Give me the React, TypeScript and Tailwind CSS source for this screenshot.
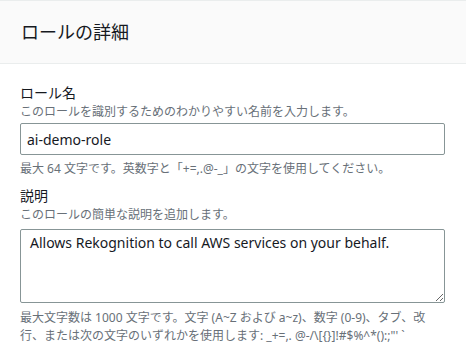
import React from "react";

export default function App() {
  const font = { fontFamily: '"Noto Sans", "Noto Sans CJK JP", sans-serif' };
  return (
    <div className="w-[466px] h-[355px] bg-white overflow-hidden text-[#16191f]" style={font}>
      <div className="border-t border-b border-[#eaeded] bg-[#fafafa] h-[64px] flex items-center px-[21px]">
        <h2 className="text-[18px] leading-[24px] font-normal">ロールの詳細</h2>
      </div>
      <div className="px-[20px] pt-[19px]">
        <div className="text-[14px] leading-[20px]">ロール名</div>
        <div className="text-[12px] leading-[16px] text-[#687078] mt-[1px]">
          このロールを識別するためのわかりやすい名前を入力します。
        </div>
        <input
          readOnly
          defaultValue="ai-demo-role"
          className="mt-[3px] block w-[425px] h-[32px] border border-[#879596] rounded-[2px] px-[6px] text-[14px] outline-none bg-white"
          style={font}
        />
        <div className="text-[12px] leading-[16px] text-[#687078] mt-[6px]">
          最大 64 文字です。英数字と「+=,.@-_」の文字を使用してください。
        </div>
        <div className="text-[14px] leading-[20px] mt-[9px]">説明</div>
        <div className="text-[12px] leading-[16px] text-[#687078] mt-[1px]">
          このロールの簡単な説明を追加します。
        </div>
        <textarea
          readOnly
          defaultValue="Allows Rekognition to call AWS services on your behalf."
          className="mt-[6px] block w-[425px] h-[74px] border border-[#879596] rounded-[2px] px-[9px] pt-[3px] text-[14px] leading-[20px] outline-none bg-white"
          style={font}
        />
        <div className="text-[12px] leading-[18px] text-[#687078] mt-[6px] whitespace-nowrap">
          最大文字数は 1000 文字です。文字 (A~Z および a~z)、数字 (0-9)、タブ、改
          <br />
          行、または次の文字のいずれかを使用します: _+=,. @-/\[{"{}"}]!#$%^*():;"' `
        </div>
      </div>
    </div>
  );
}
